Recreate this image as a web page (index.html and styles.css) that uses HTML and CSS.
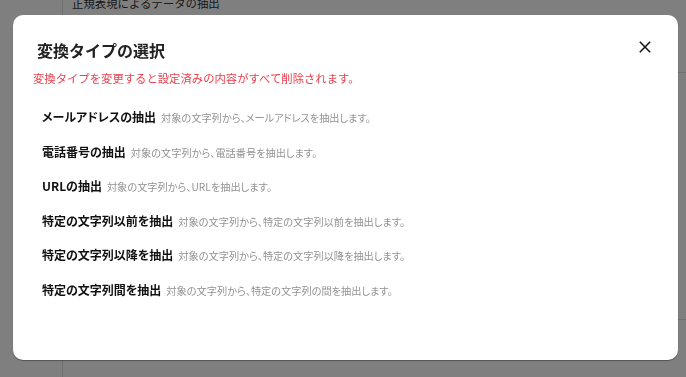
FILE: index.html
```html
<!DOCTYPE html>
<html lang="ja">
<head>
<meta charset="utf-8">
<title>変換タイプの選択</title>
<link rel="stylesheet" href="styles.css">
</head>
<body>
<div class="page">
  <aside class="sidebar"></aside>
  <main class="main">
    <div class="crumb">正規表現によるデータの抽出</div>
    <div class="section section-top"></div>
    <div class="section section-mid"></div>
  </main>
</div>

<div class="overlay">
  <div class="modal">
    <div class="modal-header">
      <h2 class="modal-title">変換タイプの選択</h2>
      <button class="close" aria-label="閉じる">
        <svg width="12" height="12" viewBox="0 0 12 12"><path d="M0.8 0.8 L11.2 11.2 M11.2 0.8 L0.8 11.2" stroke="#111" stroke-width="1.5" fill="none"/></svg>
      </button>
    </div>
    <p class="warning">変換タイプを変更すると設定済みの内容がすべて削除されます。</p>
    <ul class="options">
      <li class="option"><span class="label">メールアドレスの抽出</span><span class="desc">対象の文字列から、メールアドレスを抽出します。</span></li>
      <li class="option"><span class="label">電話番号の抽出</span><span class="desc">対象の文字列から、電話番号を抽出します。</span></li>
      <li class="option"><span class="label">URLの抽出</span><span class="desc">対象の文字列から、URLを抽出します。</span></li>
      <li class="option"><span class="label">特定の文字列以前を抽出</span><span class="desc">対象の文字列から、特定の文字列以前を抽出します。</span></li>
      <li class="option"><span class="label">特定の文字列以降を抽出</span><span class="desc">対象の文字列から、特定の文字列以降を抽出します。</span></li>
      <li class="option"><span class="label">特定の文字列間を抽出</span><span class="desc">対象の文字列から、特定の文字列の間を抽出します。</span></li>
    </ul>
  </div>
</div>
</body>
</html>
```

FILE: styles.css
```css
* { box-sizing: border-box; }
html, body {
  margin: 0;
  padding: 0;
  height: 100%;
  overflow: hidden;
  background: #fff;
  font-family: "Noto Sans CJK JP", "Noto Sans", sans-serif;
}
.page {
  display: flex;
  height: 100%;
}
.sidebar {
  width: 63px;
  flex: none;
  border-right: 1px solid #e0e0e0;
  background: #fff;
}
.main {
  flex: 1;
  display: flex;
  flex-direction: column;
}
.crumb {
  margin-top: -4px;
  padding-left: 9px;
  font-size: 11.4px;
  line-height: 14px;
  color: #333;
  height: 77px;
  border-bottom: 1px solid #e0e0e0;
}
.section-top {
  height: 247px;
  border-bottom: 1px solid #e0e0e0;
}
.overlay {
  position: fixed;
  inset: 0;
  background: rgba(0, 0, 0, 0.5);
  display: flex;
  padding: 15px 8px 17px 13px;
}
.modal {
  flex: 1;
  background: #fff;
  border-radius: 10px;
  box-shadow: 0 1px 1px rgba(0, 0, 0, 0.35);
  padding: 0 20px;
}
.modal-header {
  display: flex;
  align-items: center;
  justify-content: space-between;
  padding: 23px 0 0 4px;
}
.modal-title {
  margin: 0;
  font-size: 16px;
  line-height: 24px;
  font-weight: 700;
  color: #222;
}
.close {
  border: 0;
  background: none;
  padding: 0;
  margin-right: 7px;
  width: 12px;
  height: 12px;
  display: flex;
  margin-top: -6px;
}
.warning {
  margin: 8px 0 0;
  font-size: 11.35px;
  line-height: 16px;
  color: #e8414e;
}
.options {
  list-style: none;
  margin: 22px 0 0;
  padding: 0 0 0 9px;
  display: flex;
  flex-direction: column;
  gap: 17.2px;
  font-feature-settings: "palt";
}
.option {
  display: flex;
  align-items: baseline;
  gap: 5px;
  height: 17.4px;
  line-height: 17.4px;
}
.label {
  font-size: 12px;
  font-weight: 700;
  color: #111;
}
.desc {
  font-size: 10.2px;
  color: #939393;
}
```
